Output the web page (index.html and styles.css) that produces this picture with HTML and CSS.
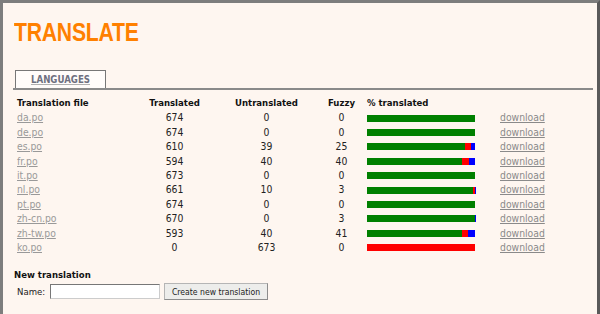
FILE: index.html
```html
<!DOCTYPE html>
<html lang="en">
<head>
    <meta charset="UTF-8">
    <title>Translate</title>
    <link rel="stylesheet" href="styles.css">
</head>
<body>
<div class="frame">
    <h1 class="title">TRANSLATE</h1>

    <div class="tabs">
        <a class="tab" href="#">LANGUAGES</a>
    </div>

    <table class="po-table">
        <colgroup>
            <col class="c-file"><col class="c-num"><col class="c-untr"><col class="c-fuzzy"><col class="c-bar"><col class="c-dl">
        </colgroup>
        <thead>
        <tr>
            <th class="left">Translation file</th>
            <th>Translated</th>
            <th>Untranslated</th>
            <th>Fuzzy</th>
            <th class="left pad">% translated</th>
            <th></th>
        </tr>
        </thead>
        <tbody>
        <tr><td><a href="#">da.po</a></td><td>674</td><td>0</td><td>0</td>
            <td class="pad"><div class="bar"><span class="ok" style="width:100%"></span></div></td><td><a href="#">download</a></td></tr>
        <tr><td><a href="#">de.po</a></td><td>674</td><td>0</td><td>0</td>
            <td class="pad"><div class="bar"><span class="ok" style="width:100%"></span></div></td><td><a href="#">download</a></td></tr>
        <tr><td><a href="#">es.po</a></td><td>610</td><td>39</td><td>25</td>
            <td class="pad"><div class="bar"><span class="ok" style="width:90.5%"></span><span class="untr" style="width:5.8%"></span><span class="fuzzy" style="width:3.7%"></span></div></td><td><a href="#">download</a></td></tr>
        <tr><td><a href="#">fr.po</a></td><td>594</td><td>40</td><td>40</td>
            <td class="pad"><div class="bar"><span class="ok" style="width:88.1%"></span><span class="untr" style="width:5.95%"></span><span class="fuzzy" style="width:5.95%"></span></div></td><td><a href="#">download</a></td></tr>
        <tr><td><a href="#">it.po</a></td><td>673</td><td>0</td><td>0</td>
            <td class="pad"><div class="bar"><span class="ok" style="width:100%"></span></div></td><td><a href="#">download</a></td></tr>
        <tr><td><a href="#">nl.po</a></td><td>661</td><td>10</td><td>3</td>
            <td class="pad"><div class="bar"><span class="ok" style="width:98.1%"></span><span class="untr" style="width:1.5%"></span><span class="fuzzy" style="width:0.4%"></span></div></td><td><a href="#">download</a></td></tr>
        <tr><td><a href="#">pt.po</a></td><td>674</td><td>0</td><td>0</td>
            <td class="pad"><div class="bar"><span class="ok" style="width:100%"></span></div></td><td><a href="#">download</a></td></tr>
        <tr><td><a href="#">zh-cn.po</a></td><td>670</td><td>0</td><td>3</td>
            <td class="pad"><div class="bar"><span class="ok" style="width:99.6%"></span><span class="fuzzy" style="width:0.4%"></span></div></td><td><a href="#">download</a></td></tr>
        <tr><td><a href="#">zh-tw.po</a></td><td>593</td><td>40</td><td>41</td>
            <td class="pad"><div class="bar"><span class="ok" style="width:88%"></span><span class="untr" style="width:5.9%"></span><span class="fuzzy" style="width:6.1%"></span></div></td><td><a href="#">download</a></td></tr>
        <tr><td><a href="#">ko.po</a></td><td>0</td><td>673</td><td>0</td>
            <td class="pad"><div class="bar"><span class="untr" style="width:100%"></span></div></td><td><a href="#">download</a></td></tr>
        </tbody>
    </table>

    <div class="new-translation">
        <h3>New translation</h3>
        <form class="new-form" onsubmit="return false">
            <label for="poName">Name:</label>
            <input type="text" id="poName">
            <button type="submit">Create new translation</button>
        </form>
    </div>
</div>
</body>
</html>
```

FILE: styles.css
```css
html, body {
    height: 100%;
}

body {
    margin: 0;
    padding: 0;
    background-color: #fef6f0;
    font-family: 'DejaVu Sans Condensed', 'DejaVu Sans', sans-serif;
    font-stretch: condensed;
    color: #222;
    overflow: hidden;
}

.frame {
    box-sizing: border-box;
    height: 100%;
    border-top: 3px solid #7d7d7d;
    border-left: 3px solid #7d7d7d;
    border-right: 3px solid #5a5a5a;
    padding: 0 4px 0 10px;
}

.title {
    margin: 14px 0 0 1px;
    font-family: 'Liberation Sans', sans-serif;
    font-size: 26.5px;
    line-height: 30px;
    font-weight: bold;
    letter-spacing: -0.3px;
    color: #ff8000;
    transform: scaleX(0.8);
    transform-origin: left center;
}

.tabs {
    display: flex;
    margin-top: 23px;
    padding-left: 2px;
    border-bottom: 2px solid #8a8a8a;
}

.tab {
    display: block;
    width: 89px;
    height: 17px;
    line-height: 18px;
    border: 1px solid #777;
    border-bottom: none;
    background-color: #fffcfa;
    text-align: center;
    font-size: 9.6px;
    font-weight: bold;
    color: #6e7080;
    text-decoration: underline;
    text-decoration-color: #b0b0b0;
}

.po-table {
    margin: 6px 0 0 4px;
    border-collapse: collapse;
    table-layout: fixed;
    width: 543px;
    font-size: 10.3px;
}

.c-file { width: 127px; }
.c-num { width: 61px; }
.c-untr { width: 123px; }
.c-fuzzy { width: 27px; }
.c-bar { width: 145px; }
.c-dl { width: 60px; }

th, td {
    padding: 0;
    height: 14.4px;
    line-height: 14.4px;
    text-align: center;
    white-space: nowrap;
}

th {
    font-size: 9.5px;
    font-weight: bold;
    color: #111;
}

th.left, td:first-child, td:last-child {
    text-align: left;
}

.pad {
    padding-left: 12px;
}

.po-table a {
    color: #999;
    text-decoration: underline;
}

.po-table td:last-child a {
    color: #8a8a8a;
}

.bar {
    display: flex;
    width: 108px;
    height: 7px;
    margin-top: 1px;
}

.bar span {
    display: block;
    height: 100%;
}

.bar .ok { background-color: #008000; }
.bar .untr { background-color: #ff0000; }
.bar .fuzzy { background-color: #0000ff; }

.new-translation {
    margin-top: 14px;
}

.new-translation h3 {
    margin: 0 0 0 1px;
    font-size: 9.5px;
    line-height: 14px;
    color: #111;
}

.new-form {
    display: flex;
    align-items: center;
    margin: 1px 0 0 4px;
    height: 17px;
    font-size: 9.5px;
}

.new-form label {
    width: 33px;
}

.new-form input {
    width: 110px;
    height: 15px;
    box-sizing: border-box;
    margin: 0;
    padding: 0 2px;
    border: 1px solid #ccc;
    border-top-color: #777;
    border-left-color: #777;
    background-color: #fff;
}

.new-form button {
    margin-left: 4px;
    width: 104px;
    height: 17px;
    padding: 0;
    box-sizing: border-box;
    border: 1px solid #b5b5b5;
    border-right-color: #8c8c8c;
    border-bottom-color: #8c8c8c;
    background-color: #ededeb;
    font-family: 'DejaVu Sans Condensed', 'DejaVu Sans', sans-serif;
    font-size: 8.6px;
    color: #222;
    cursor: pointer;
}
```
